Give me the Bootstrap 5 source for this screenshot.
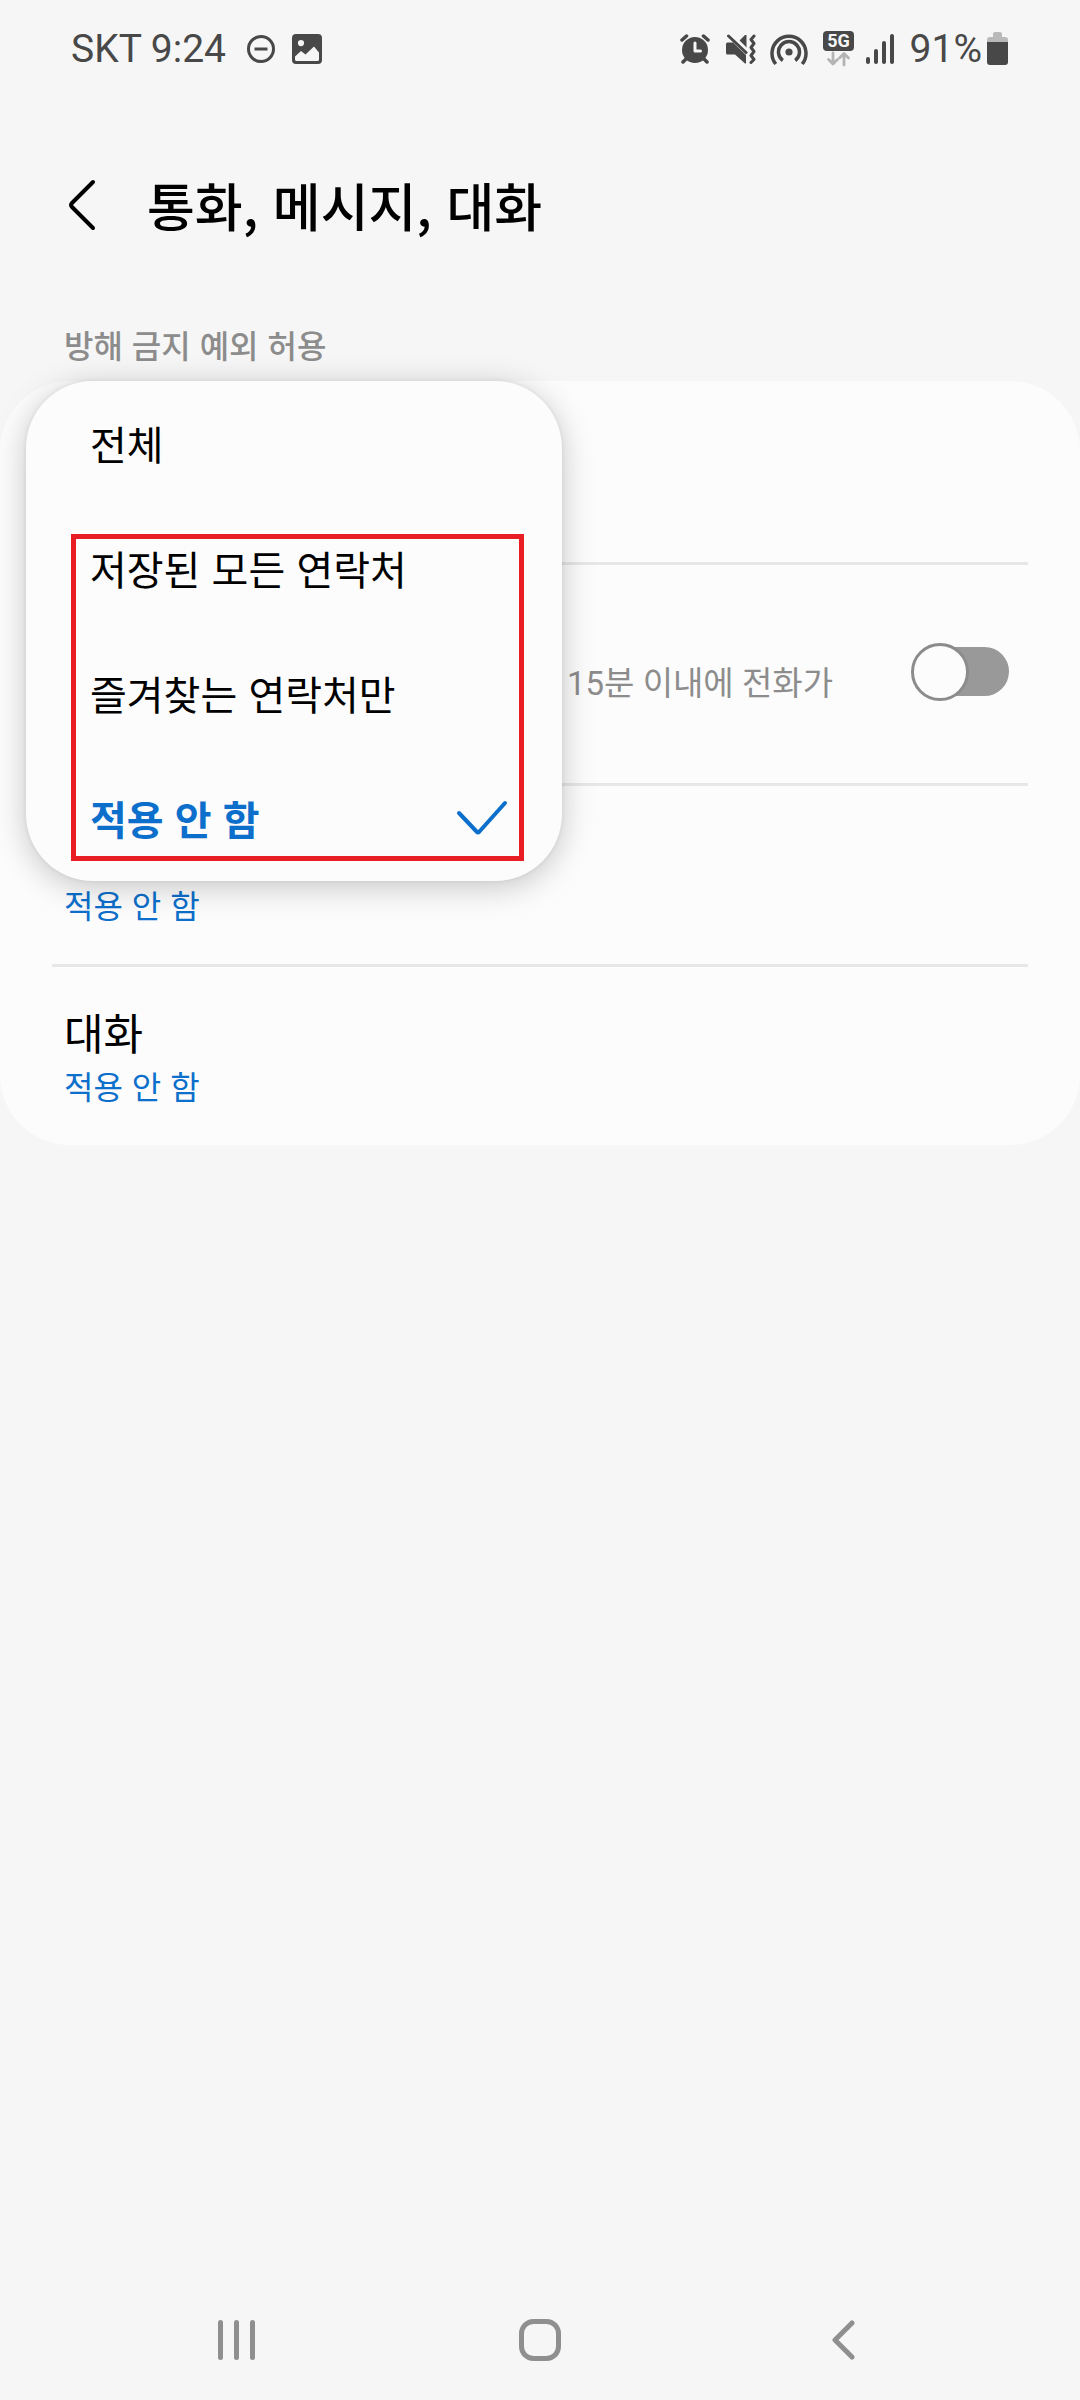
<!DOCTYPE html>
<html lang="ko">
<head>
<meta charset="utf-8">
<meta name="viewport" content="width=device-width, initial-scale=1">
<title>통화, 메시지, 대화</title>
<link href="https://cdn.jsdelivr.net/npm/bootstrap@5.3.0/dist/css/bootstrap.min.css" rel="stylesheet">
<style>
  body { background: #f6f6f6; color: #000; font-family: "Noto Sans CJK KR", sans-serif; }
  svg { display: block; flex: none; }
  .status { height: 97px; padding: 0 72px 0 71px; color: #484848; font-family: Roboto, sans-serif; font-size: 39px; line-height: 48px; }
  .status-left { gap: 16px; }
  .status-left span { margin-right: 4px; }
  .gap-icon { margin-left: 16px; }
  .title-bar { height: 216px; padding: 0 64px; }
  .title-bar h1 { font-size: 52px; line-height: 72px; font-weight: 500; margin-left: 47px; }
  .section-title { padding: 0 64px 6px; font-size: 32px; line-height: 62px; font-weight: 500; color: #8c8c8c; }
  .panel { background: #fcfcfc; border-radius: 70px; padding-top: 3px; }
  .setting { margin: 0 52px; padding: 38px 12px 40px; border-bottom: 3px solid #e7e7e7; min-height: 181px; font-size: 32px; line-height: 40px; }
  .setting:last-of-type { border-bottom: 0; min-height: 178px; }
  .setting-tall { min-height: 221px; padding: 36px 19px 40px 12px; }
  .setting-tall label { font-family: Roboto, "Noto Sans CJK KR", sans-serif; font-size: 33px; margin: 24px 78px 0 0; }
  .setting-name { font-size: 43px; line-height: 52px; margin-bottom: 8px; }
  .blue, .popup .blue { color: #0c6fcb; }
  .grey { color: #8c8c8c; }
  .toggle { appearance: none; position: relative; width: 98px; height: 58px; margin: 0; background: none; }
  .toggle::before { content: ""; position: absolute; inset: 4px 0 5px 6px; border-radius: 25px; background: #999; }
  .toggle::after { content: ""; position: absolute; left: 0; top: 0; width: 58px; height: 58px; border-radius: 50%; border: 3px solid #8c8c8c; background: #fcfcfc; }
  .popup { position: absolute; left: 26px; top: 0; width: 536px; border-radius: 67px; background: #fcfcfc; box-shadow: 0 6px 32px rgba(0,0,0,.22), 0 0 4px rgba(0,0,0,.08); }
  .popup button { height: 125px; padding: 0 54px 2px 64px; font-size: 40px; line-height: 56px; color: #000; }
  .popup .chosen { font-weight: 700; }
  .frame { position: absolute; left: 45px; right: 38px; top: 153px; bottom: 20px; border: 5px solid #e91e25; pointer-events: none; }
  .nav-keys { height: 120px; padding: 0 86px; }
</style>
</head>
<body>
<div class="min-vh-100 d-flex flex-column">

  <header class="status d-flex align-items-center">
    <div class="status-left d-flex align-items-center">
      <span>SKT 9:24</span>
      <svg width="30" height="30" viewBox="0 0 30 30" fill="none" stroke="currentColor" stroke-width="3"><circle cx="15" cy="15" r="12.500"/><path d="M8.500 15h13"/></svg>
      <svg width="30" height="30" viewBox="0 0 30 30"><path fill="currentColor" fill-rule="evenodd" d="M4 0h22a4 4 0 0 1 4 4v22a4 4 0 0 1-4 4H4a4 4 0 0 1-4-4V4a4 4 0 0 1 4-4zM9 6a3 3 0 1 0 0 6.200a3 3 0 0 0 0-6.200zM3 22.500V26l1 1h22l1-1v-7.500L22 12.500 13.500 20.500 9 17z"/></svg>
    </div>

    <div class="d-flex align-items-center ms-auto">
      <svg width="30" height="30" viewBox="0 0 30 30"><g fill="none" stroke="currentColor" stroke-linecap="round"><path stroke-width="3.500" d="M2 6l4.500-4M28 6l-4.500-4M6 25l-3 3M24 25l3 3"/></g><circle cx="15" cy="16" r="13" fill="currentColor"/><path d="M15 9v8h5.500" fill="none" stroke="#f6f6f6" stroke-width="3" stroke-linecap="round" stroke-linejoin="round"/></svg>
      <svg class="gap-icon" width="30" height="30" viewBox="0 0 30 30"><path fill="currentColor" d="M0 10q0-1.500 1.500-1.500H7L20 21v8.500h-1L9 20.500H1.500Q0 20.500 0 19zM12 8L19 1h1.500v15z"/><g fill="none" stroke="currentColor" stroke-linecap="round" stroke-linejoin="round"><path stroke="#f6f6f6" stroke-width="3" d="M5 0l16 16"/><path stroke-width="3" d="M2.500 2L20 18.500"/><path stroke-width="3" d="M28 2l-3 3.500 3 4-3 4 3 4-3 4 3 4-3 3"/></g></svg>
      <svg style="margin-left:14px" width="38" height="34" viewBox="0 0 38 34" fill="none" stroke="currentColor" stroke-width="3.500"><circle cx="19" cy="20" r="3.600" fill="currentColor" stroke="none"/><path d="M12.800 28.500a10.500 10.500 0 1 1 12.400 0M5.800 32a17 17 0 1 1 26.400 0"/></svg>
      <svg style="margin-left:15px" width="31" height="36" viewBox="0 0 31 36"><rect width="31" height="20" rx="4" fill="currentColor"/><text x="15.500" y="16" text-anchor="middle" font-family="Roboto" font-weight="700" font-size="18" fill="#f6f6f6">5G</text><path d="M10 22v11M5.500 28.500L10 33l4.500-4.500M21 34V23M16.500 27L21 22.500l4.500 4.500" fill="none" stroke="#b4b4b4" stroke-width="2.800" stroke-linecap="round" stroke-linejoin="round"/></svg>
      <svg style="margin-left:12px" width="28" height="30" viewBox="0 0 28 30" fill="currentColor"><rect y="23" width="4" height="7" rx="2"/><rect x="8" y="15" width="4" height="15" rx="2"/><rect x="16" y="7" width="4" height="23" rx="2"/><rect x="24" width="4" height="30" rx="2"/></svg>
      <span class="gap-icon">91%</span>
      <svg style="margin-left:5px" width="21" height="34" viewBox="0 0 21 34"><path fill="#b9b9b9" d="M6 2q0-2 2-2h5q2 0 2 2v3h3q3 0 3 3v3H0V8q0-3 3-3h3z"/><path fill="currentColor" d="M0 10h21v20q0 3-3 3H3q-3 0-3-3z"/></svg>
    </div>
  </header>

  <div class="title-bar d-flex align-items-center">
    <button type="button" class="btn p-0 border-0" aria-label="뒤로"><svg width="36" height="52" viewBox="0 0 36 52" fill="none" stroke="#000" stroke-width="4" stroke-linecap="round" stroke-linejoin="round"><path d="M29 3L8 24q-2 2 0 4l21 21"/></svg></button>
    <h1 class="mb-0">통화, 메시지, 대화</h1>
  </div>

  <h2 class="section-title mb-0">방해 금지 예외 허용</h2>

  <main class="panel position-relative">
    <div class="setting"></div>
    <div class="setting setting-tall d-flex align-items-center justify-content-end">
      <label class="grey" for="repeat">15분 이내에 전화가</label>
      <input class="toggle" type="checkbox" role="switch" id="repeat">
    </div>
    <div class="setting d-flex align-items-end"><span class="blue">적용 안 함</span></div>
    <div class="setting">
      <div class="setting-name">대화</div>
      <div class="blue">적용 안 함</div>
    </div>

    <section class="popup" aria-label="허용 대상">
      <button type="button" class="btn border-0 w-100 d-flex align-items-center">전체</button>
      <button type="button" class="btn border-0 w-100 d-flex align-items-center">저장된 모든 연락처</button>
      <button type="button" class="btn border-0 w-100 d-flex align-items-center">즐겨찾는 연락처만</button>
      <button type="button" class="btn border-0 w-100 d-flex align-items-center justify-content-between chosen blue">적용 안 함
        <svg width="52" height="36" viewBox="0 0 52 36" fill="none" stroke="currentColor" stroke-width="4" stroke-linecap="round" stroke-linejoin="round"><path d="M3 13l18 19q1 1 2 0L49 3"/></svg>
      </button>
      <div class="frame"></div>
    </section>
  </main>

  <nav class="nav-keys row g-0 align-items-center mt-auto">
    <div class="col d-flex justify-content-center"><button type="button" class="btn p-0 border-0" aria-label="최근 앱"><svg width="38" height="40" viewBox="0 0 38 40" fill="#8f8f8f"><rect width="5" height="40" rx="2.500"/><rect x="16" width="5" height="40" rx="2.500"/><rect x="32" width="5" height="40" rx="2.500"/></svg></button></div>
    <div class="col d-flex justify-content-center"><button type="button" class="btn p-0 border-0" aria-label="홈"><svg width="42" height="42" viewBox="0 0 42 42" fill="none" stroke="#8f8f8f" stroke-width="5"><rect x="2.500" y="2.500" width="37" height="37" rx="12"/></svg></button></div>
    <div class="col d-flex justify-content-center"><button type="button" class="btn p-0 border-0" aria-label="이전"><svg width="24" height="40" viewBox="0 0 24 40" fill="none" stroke="#8f8f8f" stroke-width="5" stroke-linecap="round" stroke-linejoin="round"><path d="M21 3L4 20l17 17"/></svg></button></div>
  </nav>
</div>
<script src="https://cdn.jsdelivr.net/npm/bootstrap@5.3.0/dist/js/bootstrap.bundle.min.js"></script>
</body>
</html>
